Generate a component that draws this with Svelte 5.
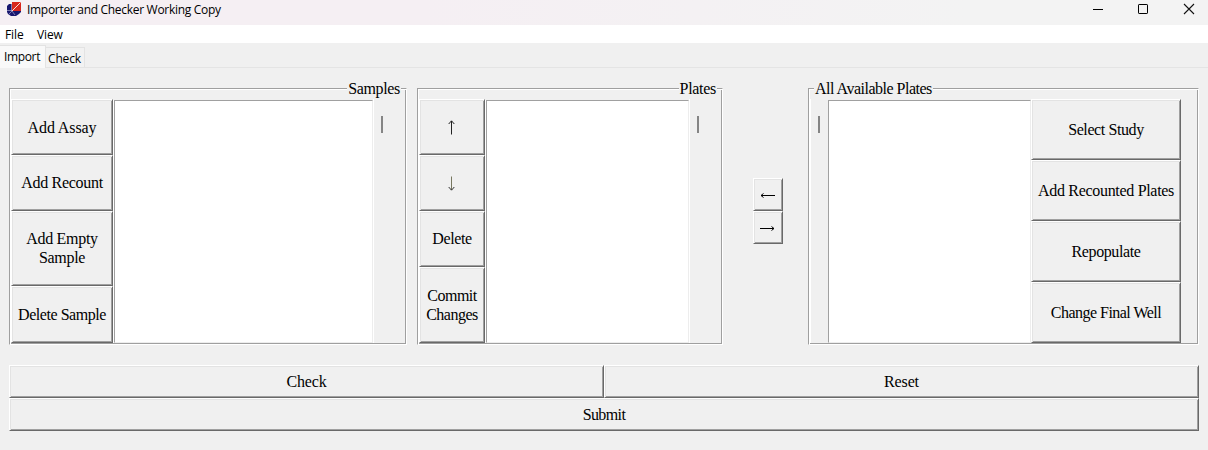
<script>
  const sampleActions = [
    { label: 'Add Assay', tracking: -0.1 },
    { label: 'Add Recount', tracking: -0.3, lift: 2 },
    { label: 'Add Empty\nSample', tracking: -0.3, lift: 2 },
    { label: 'Delete Sample', tracking: -0.45 }
  ];
  const plateActions = [
    { label: 'Delete', tracking: -0.35, lift: 2 },
    { label: 'Commit\nChanges', tracking: -0.5 }
  ];
  const availableActions = [
    { label: 'Select Study', tracking: -0.4 },
    { label: 'Add Recounted Plates', tracking: -0.31 },
    { label: 'Repopulate', tracking: -0.4 },
    { label: 'Change Final Well', tracking: -0.53 }
  ];
</script>

{#snippet action(item)}
  <button style:letter-spacing="{item.tracking}px" style:padding-bottom="{item.lift ?? 0}px">{item.label}</button>
{/snippet}

<div class="window">
  <header class="titlebar">
    <svg class="logo" width="14" height="14" viewBox="0 0 14 14">
      <path d="M2 2H5V9H14V10L12 12L9 14H4L1 12L0 10V4Z" fill="#17176f" />
      <path d="M5 0H14V9H5Z" fill="#d8261c" />
      <path d="M5 9L13.5 .5" stroke="#f8dcda" stroke-width="1" />
      <path d="M0 8.5H5M1.5 12.5L5 9M4.5 2V9M5 9L8 13" fill="none" stroke="#a8a6cc" stroke-width=".7" />
    </svg>
    <span class="title">Importer and Checker Working Copy</span>
    <div class="controls">
      <svg width="12" height="12" viewBox="0 0 12 12"><path d="M2 6.5H12" stroke="#000" /></svg>
      <svg width="12" height="12" viewBox="0 0 12 12"><rect x="1.5" y="1.5" width="9" height="9" rx=".6" fill="none" stroke="#000" /></svg>
      <svg width="12" height="12" viewBox="0 0 12 12"><path d="M1 1L11 11M11 1L1 11" stroke="#111" stroke-width="1.1" /></svg>
    </div>
  </header>
  <nav class="menu"><span class="file">File</span><span class="view">View</span></nav>
  <div class="tabs">
    <div class="tab active"><span>Import</span></div>
    <div class="tab"><span>Check</span></div>
  </div>

  <main>
    <div class="groups">
      <section class="group samples">
        <span class="legend">Samples</span>
        <div class="stack">
          {#each sampleActions as item}{@render action(item)}{/each}
        </div>
        <div class="list"></div>
        <div class="track"><i></i></div>
      </section>

      <section class="group plates">
        <span class="legend">Plates</span>
        <div class="stack">
          <button class="vertical" aria-label="Move up">
            <svg width="7" height="15" viewBox="0 0 7 15"><path d="M3.5 1V14.5" stroke="#222" /><path d="M.7 4L3.5 .8L6.3 4" fill="none" stroke="#222" /></svg>
          </button>
          <button class="vertical" aria-label="Move down">
            <svg width="7" height="15" viewBox="0 0 7 15"><path d="M3.5 .5V14" stroke="#77775f" /><path d="M.7 11L3.5 14.2L6.3 11" fill="none" stroke="#333" /></svg>
          </button>
          {#each plateActions as item}{@render action(item)}{/each}
        </div>
        <div class="list"></div>
        <div class="track"><i></i></div>
      </section>

      <div class="movers">
        <button aria-label="Move left">
          <svg width="15" height="7" viewBox="0 0 15 7"><path d="M1 3.5H15" stroke="#000" /><path d="M3.5 1.5L1 3.5L3.5 5.5" fill="none" stroke="#000" /></svg>
        </button>
        <button aria-label="Move right">
          <svg width="15" height="7" viewBox="0 0 15 7"><path d="M0 3.5H14" stroke="#000" /><path d="M11.5 1.5L14 3.5L11.5 5.5" fill="none" stroke="#000" /></svg>
        </button>
      </div>

      <section class="group available">
        <span class="legend">All Available Plates</span>
        <div class="track"><i></i></div>
        <div class="list"></div>
        <div class="stack">
          {#each availableActions as item}{@render action(item)}{/each}
        </div>
      </section>
    </div>

    <div class="footer">
      <button>Check</button>
      <button>Reset</button>
      <button class="wide">Submit</button>
    </div>
  </main>
</div>

<style>
  :global(body) { margin: 0; background: #f0f0f0; overflow: hidden; }
  .window { box-sizing: border-box; width: 1208px; height: 450px; background: #f0f0f0; color: #000; font: 12px/18px "Open Sans", "Noto Sans", sans-serif; overflow: hidden; }
  .titlebar { height: 25px; box-sizing: border-box; display: flex; align-items: flex-start; padding: 2px 13px 0 7px; background: linear-gradient(90deg, #f5eff3 0%, #f5eff3 35%, #f3f3f3 80%); }
  .logo { display: block; }
  .title { margin: -1px 0 0 6px; letter-spacing: -.3px; white-space: nowrap; }
  .controls { margin: 1px 0 0 auto; display: flex; gap: 34px; }
  .controls svg { display: block; }
  .menu { height: 18px; background: #fff; display: flex; line-height: 19px; padding-left: 5px; letter-spacing: -.1px; }
  .file { width: 32px; }
  .tabs { height: 25px; box-sizing: border-box; border-bottom: 1px solid #e4e4e4; display: flex; align-items: flex-end; }
  .tab { box-sizing: border-box; height: 20px; width: 39px; border: 1px solid #e3e3e3; border-width: 1px 1px 0 0; background: #f2f2f2; padding: 2px 0 0 2px; white-space: nowrap; letter-spacing: -.15px; }
  .tab.active { width: 46px; height: 23px; margin-bottom: -1px; background: #f9f9f9; padding: 2px 0 0 4px; letter-spacing: -.35px; }

  main { padding: 20px 9px 0; font: 16px/19px "Liberation Serif", serif; }
  .groups { display: flex; height: 257px; }
  .group { position: relative; box-sizing: border-box; height: 257px; display: flex; padding-top: 10px; border: solid; border-width: 1px; border-color: #9f9f9f #fff #fff #9f9f9f; box-shadow: inset 1px 1px #fff, inset -1px -1px #9f9f9f; }
  .samples { width: 398px; margin-right: 10px; padding-left: 1px; }
  .plates { width: 306px; padding-left: 1px; }
  .available { width: 391px; padding-left: 1px; }
  .legend { position: absolute; top: -10px; height: 19px; padding: 0 1px; background: #f0f0f0; white-space: nowrap; }
  .samples .legend { right: 5px; letter-spacing: -.35px; }
  .plates .legend { right: 5px; letter-spacing: -.3px; }
  .available .legend { left: 5px; letter-spacing: -.5px; }

  button { appearance: none; box-sizing: border-box; margin: 0; padding: 0; border: 1px solid; border-color: #fff #696969 #696969 #fff; border-radius: 0; box-shadow: inset 1px 1px #e3e3e3, inset -1px -1px #a0a0a0; background: #f0f0f0; color: #000; font: inherit; white-space: pre-line; text-align: center; }
  button svg { display: block; margin: 0 auto; }
  .vertical { padding-right: 2px; }
  .stack { display: grid; height: 244px; }
  .samples .stack { width: 102px; grid-template-rows: 56px 56px 75px 57px; }
  .plates .stack { width: 66px; grid-template-rows: 56px 56px 56px 76px; }
  .available .stack { width: 150px; grid-template-rows: repeat(4, 61px); }
  .list { box-sizing: border-box; height: 243px; margin-top: 1px; margin-left: 1px; background: #fff; border: 1px solid; border-color: #a0a0a0 #ededed #ededed #a0a0a0; box-shadow: -1px 0 #fff; }
  .samples .list { width: 259px; }
  .plates .list { width: 203px; }
  .available .list { width: 203px; margin-left: 0; box-shadow: none; }
  .track { box-sizing: border-box; height: 244px; flex: 1; border-left: 1px solid #fff; padding: 17px 0 0 7px; }
  .available .track { flex: none; width: 18px; }
  .track i { display: block; width: 2px; height: 17px; background: #858585; }
  .movers { width: 30px; margin: 90px 25px 0 30px; display: grid; grid-template-rows: 33px 33px; height: 66px; }
  .movers button { padding: 2px 1px 0 0; }
  .footer { margin-top: 20px; width: 1190px; display: grid; grid-template: 33px 33px / 595px 595px; }
  .footer button { letter-spacing: -.15px; }
  .footer .wide { grid-column: 1 / 3; letter-spacing: -.6px; }
</style>
